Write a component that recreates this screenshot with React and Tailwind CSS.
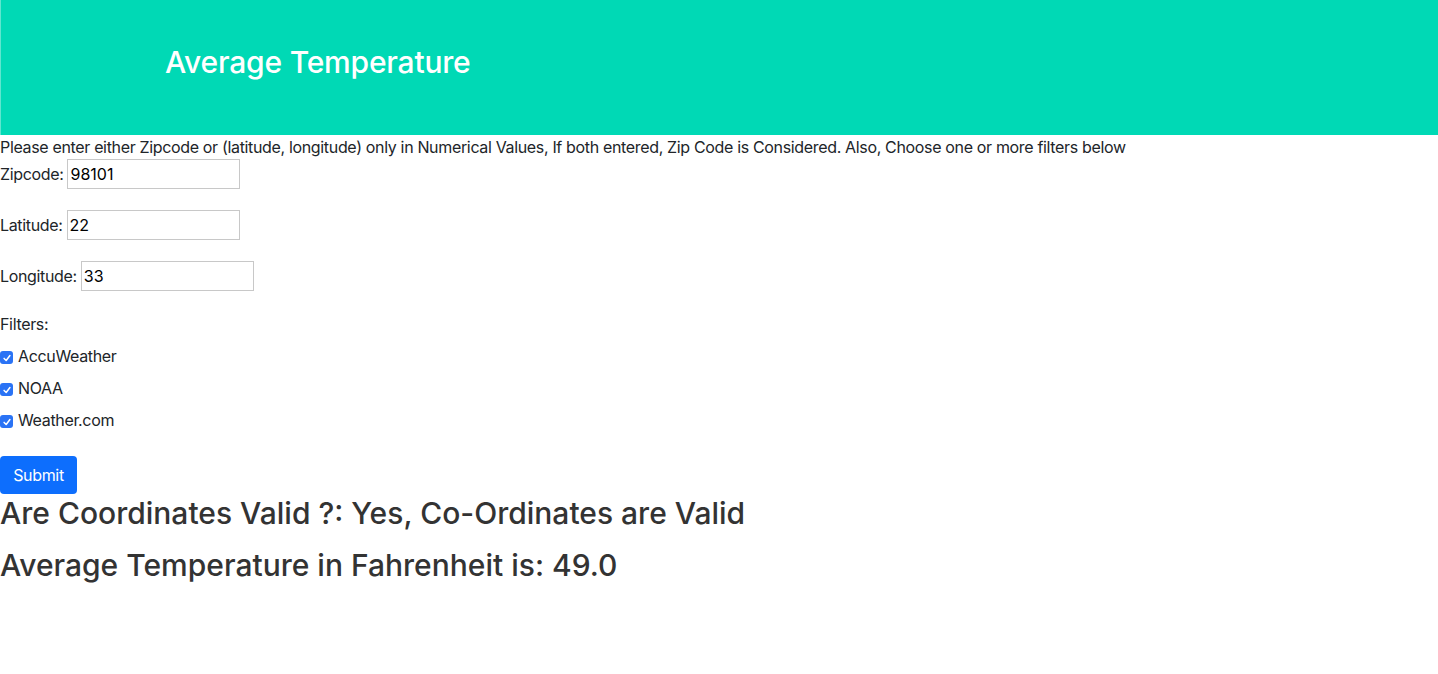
import { useState } from 'react';

const Field = ({ label, value, onChange }) => (
    <div className="flex items-center h-[30px]">
        <label className="mr-1">{label}</label>
        <input
            type="text"
            value={value}
            onChange={(e) => onChange(e.target.value)}
            className="h-[30px] w-[173px] border border-[#c8c8c8] px-[2px] text-black tracking-normal outline-none"
        />
    </div>
);

const Check = ({ label, checked, onToggle }) => (
    <label className="flex items-center h-6 cursor-pointer" onClick={onToggle}>
        <span
            className={`mr-[5px] mt-[3px] flex h-[13px] w-[13px] items-center justify-center rounded-[3px] ${checked ? 'bg-[#2a73f5]' : 'border border-gray-400 bg-white'}`}
        >
            {checked && (
                <svg viewBox="0 0 12 12" className="h-[10px] w-[10px]" fill="none" stroke="white" strokeWidth="1.8" strokeLinecap="round" strokeLinejoin="round">
                    <path d="M2.5 6.5 L5 9 L9.5 3" />
                </svg>
            )}
        </span>
        {label}
    </label>
);

export default function App() {
    const [zip, setZip] = useState('98101');
    const [lat, setLat] = useState('22');
    const [lon, setLon] = useState('33');
    const [filters, setFilters] = useState({ accu: true, noaa: true, wcom: true });

    const toggle = (key) => setFilters((f) => ({ ...f, [key]: !f[key] }));

    return (
        <div className="min-h-screen bg-white text-[16px] leading-6 tracking-[-0.34px] text-[#212529] font-['Inter',sans-serif]">
            <div className="h-[135px] bg-[#00d9b5] border-l border-[#5fe6cf] pl-[164px] pt-[44px]">
                <h1 className="text-[30px] leading-9 tracking-[-0.2px] font-medium text-white">Average Temperature</h1>
            </div>

            <p>Please enter either Zipcode or (latitude, longitude) only in Numerical Values, If both entered, Zip Code is Considered. Also, Choose one or more filters below</p>

            <div className="flex flex-col gap-[21px]">
                <Field label="Zipcode:" value={zip} onChange={setZip} />
                <Field label="Latitude:" value={lat} onChange={setLat} />
                <Field label="Longitude:" value={lon} onChange={setLon} />
            </div>

            <p className="mt-[21px]">Filters:</p>
            <div className="mt-2 flex flex-col gap-2">
                <Check label="AccuWeather" checked={filters.accu} onToggle={() => toggle('accu')} />
                <Check label="NOAA" checked={filters.noaa} onToggle={() => toggle('noaa')} />
                <Check label="Weather.com" checked={filters.wcom} onToggle={() => toggle('wcom')} />
            </div>

            <button className="mt-6 h-[38px] w-[77px] rounded-[4px] bg-[#0d6efd] text-white">Submit</button>

            <h3 className="mt-px text-[30px] font-medium leading-[36px] tracking-normal text-[#333]">Are Coordinates Valid ?: Yes, Co-Ordinates are Valid</h3>
            <h3 className="mt-4 text-[30px] font-medium leading-[36px] tracking-normal text-[#333]">Average Temperature in Fahrenheit is: 49.0</h3>
        </div>
    );
}
